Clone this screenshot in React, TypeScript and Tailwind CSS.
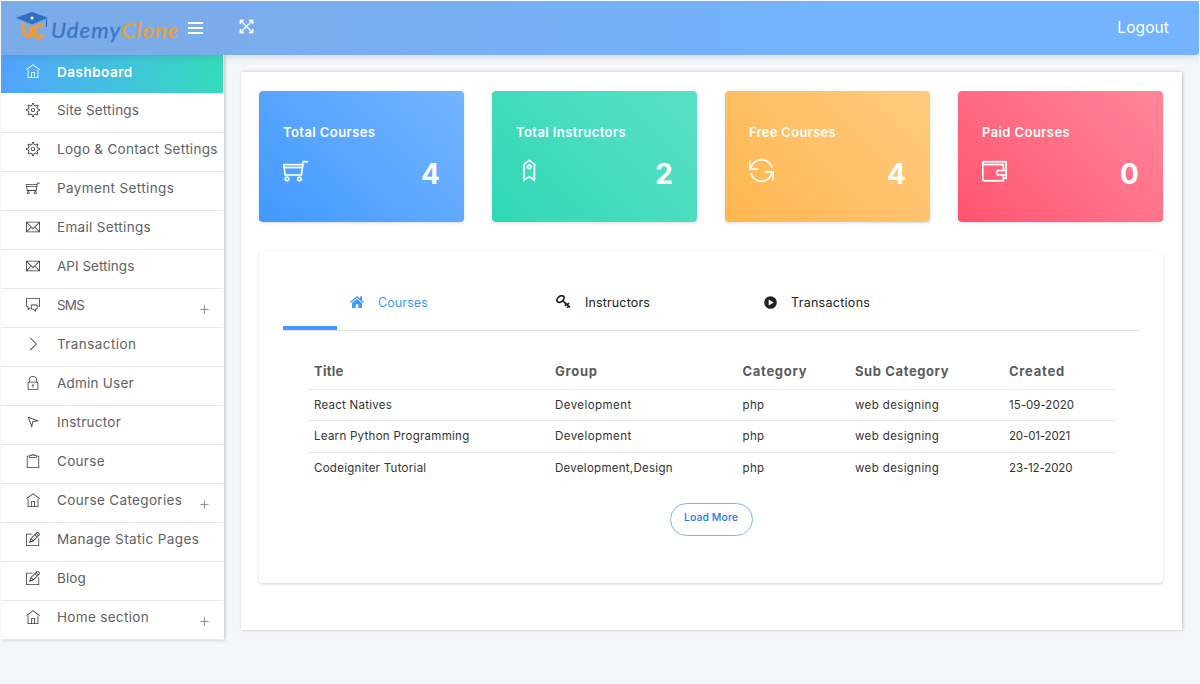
import React from 'react';
import type { IconType } from 'react-icons';
import {
  TfiAngleRight, TfiClipboard, TfiComments, TfiEmail, TfiFullscreen, TfiHome, TfiLocationArrow,
  TfiLock, TfiPencilAlt, TfiPlus, TfiReload, TfiSettings, TfiShoppingCart, TfiTag, TfiWallet,
} from 'react-icons/tfi';

type MenuItem = { label: string; icon: IconType; tracking: string; expandable?: boolean };

const menu: MenuItem[] = [
  { label: 'Site Settings', icon: TfiSettings, tracking: 'tracking-[0.2px]' },
  { label: 'Logo & Contact Settings', icon: TfiSettings, tracking: 'tracking-[0.29px]' },
  { label: 'Payment Settings', icon: TfiShoppingCart, tracking: 'tracking-[0.38px]' },
  { label: 'Email Settings', icon: TfiEmail, tracking: 'tracking-[0.32px]' },
  { label: 'API Settings', icon: TfiEmail, tracking: 'tracking-[0.02px]' },
  { label: 'SMS', icon: TfiComments, tracking: 'tracking-[-0.8px]', expandable: true },
  { label: 'Transaction', icon: TfiAngleRight, tracking: 'tracking-[0.42px]' },
  { label: 'Admin User', icon: TfiLock, tracking: 'tracking-[0.22px]' },
  { label: 'Instructor', icon: TfiLocationArrow, tracking: 'tracking-[0.27px]' },
  { label: 'Course', icon: TfiClipboard, tracking: 'tracking-[0.3px]' },
  { label: 'Course Categories', icon: TfiHome, tracking: 'tracking-[0.35px]', expandable: true },
  { label: 'Manage Static Pages', icon: TfiPencilAlt, tracking: 'tracking-[0.4px]' },
  { label: 'Blog', icon: TfiPencilAlt, tracking: 'tracking-[0.1px]' },
  { label: 'Home section', icon: TfiHome, tracking: 'tracking-[0.32px]', expandable: true },
];

const stats = [
  { label: 'Total Courses', value: 4, icon: TfiShoppingCart, color: 'from-[#4099ff] to-[#73b4ff]', tracking: 'tracking-[0.43px]' },
  { label: 'Total Instructors', value: 2, icon: TfiTag, color: 'from-[#2ed8b6] to-[#59e0c5]', tracking: 'tracking-[0.42px]' },
  { label: 'Free Courses', value: 4, icon: TfiReload, color: 'from-[#ffb64d] to-[#ffcb80]', tracking: 'tracking-[0.3px]' },
  { label: 'Paid Courses', value: 0, icon: TfiWallet, color: 'from-[#ff5370] to-[#ff869a]', tracking: 'tracking-[0.41px]' },
];

const courses = [
  { title: 'React Natives', group: 'Development', date: '15-09-2020', titleTracking: 'tracking-[0.25px]', groupTracking: 'tracking-[0.44px]', dateTracking: 'tracking-[0.02px]' },
  { title: 'Learn Python Programming', group: 'Development', date: '20-01-2021', titleTracking: 'tracking-[0.28px]', groupTracking: 'tracking-[0.44px]', dateTracking: 'tracking-[-0.14px]' },
  { title: 'Codeigniter Tutorial', group: 'Development,Design', date: '23-12-2020', titleTracking: 'tracking-[0.28px]', groupTracking: 'tracking-[0.28px]', dateTracking: 'tracking-[-0.12px]' },
];

function Logo() {
  return (
    <div className="flex items-center text-[#3b76c8]">
      <svg width="33" height="30" viewBox="0 0 33 30" className="shrink-0">
        <g fill="none" stroke="#eb9c36" strokeWidth="3.600">
          <path d="M7 11v9.500l5.500 4 3-2.500V13" />
          <path d="M27.500 12.500l-6.500 2-2 3v7l3 1.500 5.500-3" />
        </g>
        <path fill="#2f6fc4" d="M16 0l16 5.800-16 6.700L0 5.800z" />
        <circle cx="16" cy="6" r="1.500" fill="#fff" />
        <path d="M30.500 6v9" stroke="#2f6fc4" strokeWidth="1.200" />
      </svg>
      <div className="ml-[2px] mt-[7px] font-['Lato'] text-[22px] italic leading-none tracking-[1.15px] [-webkit-text-stroke:0.4px_currentColor]">
        Udemy<span className="text-[#eb9c36]">Clone</span>
      </div>
    </div>
  );
}

function SolidHome() {
  return (
    <svg width="14" height="12" viewBox="0 0 14 12" fill="currentColor" className="mb-[3px]">
      <path d="M7 0L0 6l.8.900L7 1.700l6.200 5.200.800-.900-2-1.700V.500h-2v2.100z" />
      <path d="M7 2.900L2 7v5h3.700V8.300h2.600V12H12V7z" />
    </svg>
  );
}

function SolidKey() {
  return (
    <svg width="15" height="14" viewBox="0 0 15 14" fill="none" stroke="currentColor" className="mb-[3px]">
      <ellipse cx="4.500" cy="4" rx="4" ry="2.700" strokeWidth="1.700" transform="rotate(-38 4.500 4)" />
      <path d="M7 6l7 6.300M10.200 9l-1.200 2M13 8l-1.800 1.800M12.300 11l-1 1.800" strokeWidth="1.700" />
    </svg>
  );
}

function SolidPlay() {
  return (
    <svg width="13" height="13" viewBox="0 0 13 13" className="mb-[3px]">
      <circle cx="6.500" cy="6.500" r="6.300" fill="currentColor" />
      <path d="M4.700 3.500l5 3-5 3z" fill="#fff" />
    </svg>
  );
}

export default function App() {
  return (
    <div className="h-[684px] w-[1200px] overflow-hidden border border-[#f7f8fb] bg-[#f4f6fb] font-['Inter',sans-serif] text-[#606164]">
      <header className="relative z-10 flex h-[54px] items-center rounded-br-[3px] bg-linear-to-r from-[#7bacea] from-15% to-[#73b3ff] to-70% pb-px shadow-[0_1px_9px_rgba(69,90,100,0.22)]">
        <div className="-mt-0.5 ml-[15px] w-[172px]"><Logo /></div>
        <div className="flex w-[15px] flex-col gap-[3px]">
          <span className="h-0.5 bg-white" />
          <span className="h-0.5 bg-white" />
          <span className="h-0.5 bg-white" />
        </div>
        <TfiFullscreen size={15} className="-mt-0.5 ml-[36px] text-white" strokeWidth={0.6} />
        <span className="ml-auto mr-[30px] text-[15.5px] leading-none tracking-[0.1px] text-white">Logout</span>
      </header>

      <div className="flex items-start">
        <nav className="w-[223px] shrink-0 bg-white pr-px shadow-[1px_0_3px_rgba(43,43,43,0.25)]">
          <div className="flex h-[39px] items-center border-b border-white bg-linear-to-r from-[#52a2ff] to-[#34dbb9] pb-1 pl-[25px] text-white">
            <TfiHome size={14} className="mb-0.5" />
            <span className="ml-[17px] text-[13.5px] font-semibold tracking-[0.5px]">Dashboard</span>
          </div>
          {menu.map(({ label, icon: Icon, tracking, expandable }) => (
            <div key={label} className="flex h-[39px] items-center border-b border-[#e6e7e9] pl-[25px]">
              <Icon size={14} className="mb-[7px] shrink-0 text-[#3c3c3e]" />
              <span className={`mb-1 ml-[17px] whitespace-nowrap text-[13.5px] leading-none ${tracking}`}>{label}</span>
              {expandable && <TfiPlus size={9} className="ml-auto mr-[14px] mt-[3px] text-[#68696b]" strokeWidth={0.4} />}
            </div>
          ))}
        </nav>

        <main className="ml-[17px] mt-[17px] h-[558px] w-[941px] bg-white pl-[18px] pr-[19px] pt-[19px] shadow-[1px_0_3px_rgba(43,43,43,0.25)]">
          <div className="grid grid-cols-4 gap-7">
            {stats.map(({ label, value, icon: Icon, color, tracking }) => (
              <section key={label} className={`h-[131px] rounded-[4px] bg-linear-45 px-[24px] pt-[33px] text-white shadow-[0_1px_3px_rgba(4,26,55,0.16)] ${color}`}>
                <h2 className={`text-[13px] leading-4 font-semibold ${tracking}`}>{label}</h2>
                <div className="mt-[16px] flex h-8 items-center justify-between">
                  <Icon size={25} className="mb-[3px]" strokeWidth={0.2} />
                  <span className="mt-[3px] text-[28px] leading-none font-bold">{value}</span>
                </div>
              </section>
            ))}
          </div>

          <section className="mt-[29px] h-[332px] rounded-[4px] bg-white px-6 pt-[27px] shadow-[0_1px_3px_rgba(4,26,55,0.18)]">
            <div className="-mr-px flex h-[53px] items-center border-b border-[#e1e4e7] pb-px text-[12.5px] leading-none text-[#222]">
              <div className="flex w-[206px] items-center pl-[67px] text-[#4099ff]">
                <SolidHome /><span className="ml-[14px] tracking-[0.11px]">Courses</span>
              </div>
              <div className="flex w-[208px] items-center pl-[67px]">
                <SolidKey /><span className="ml-[14px] tracking-[0.14px]">Instructors</span>
              </div>
              <div className="flex items-center pl-[67px]">
                <SolidPlay /><span className="ml-[14px] tracking-[0.28px]">Transactions</span>
              </div>
            </div>
            <div className="-mt-[5px] h-1 w-[54px] bg-[#4099ff]" />

            <table className="ml-6 mt-[25px] w-[809px] table-fixed border-collapse text-left leading-none">
              <colgroup>
                <col className="w-[241px]" /><col className="w-[187px]" /><col className="w-[113px]" /><col className="w-[154px]" /><col />
              </colgroup>
              <thead>
                <tr className="h-[34px] border-b border-[#e6e8ea] text-[13px] text-[#5b5c5e]">
                  <th className="pl-[7px] tracking-[0.25px]">Title</th>
                  <th className="pl-[7px] tracking-[0.75px]">Group</th>
                  <th className="pl-[7.500px] tracking-[0.7px]">Category</th>
                  <th className="pl-[7px] tracking-[0.6px]">Sub Category</th>
                  <th className="pl-[7px] tracking-[0.75px]">Created</th>
                </tr>
              </thead>
              <tbody>
                {courses.map((c) => (
                  <tr key={c.title} className="h-[31.5px] border-b border-[#e6e8ea] text-[11.5px] text-[#333] last:border-0">
                    <td className={`pl-[7px] pt-[1.5px] ${c.titleTracking}`}>{c.title}</td>
                    <td className={`pl-[7px] pt-[1.5px] ${c.groupTracking}`}>{c.group}</td>
                    <td className="pl-[7.500px] pt-[1.5px] tracking-[0.37px]">php</td>
                    <td className="pl-[7px] pt-[1.5px] tracking-[0.38px]">web designing</td>
                    <td className={`pl-[7px] pt-[1.5px] ${c.dateTracking}`}>{c.date}</td>
                  </tr>
                ))}
              </tbody>
            </table>
            <button className="mx-auto mt-[19px] block h-[33px] w-[83px] rounded-full border border-[#7fb3f5] pb-0.5 text-[10.5px] font-medium tracking-[0.05px] text-[#2378ea]">
              Load More
            </button>
          </section>
        </main>
      </div>
    </div>
  );
}
